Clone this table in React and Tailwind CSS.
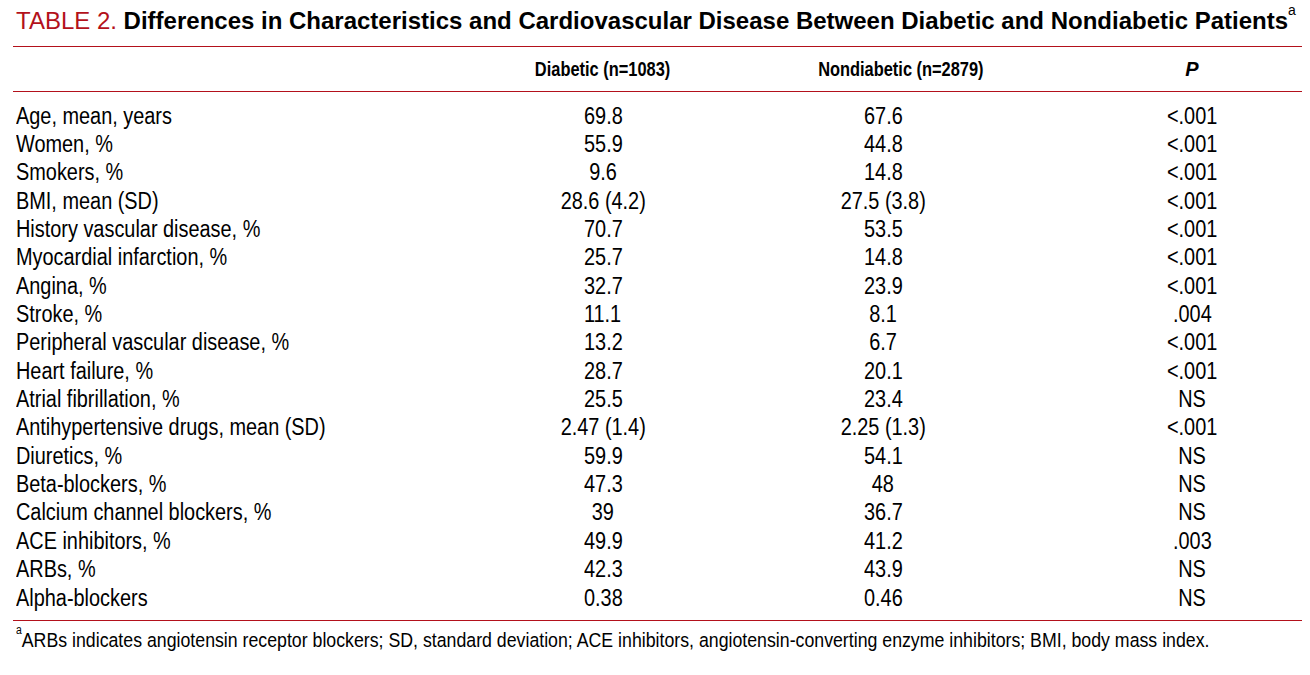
import React from "react";

const rows = [
  ["Age, mean, years", "69.8", "67.6", "<.001"],
  ["Women, %", "55.9", "44.8", "<.001"],
  ["Smokers, %", "9.6", "14.8", "<.001"],
  ["BMI, mean (SD)", "28.6 (4.2)", "27.5 (3.8)", "<.001"],
  ["History vascular disease, %", "70.7", "53.5", "<.001"],
  ["Myocardial infarction, %", "25.7", "14.8", "<.001"],
  ["Angina, %", "32.7", "23.9", "<.001"],
  ["Stroke, %", "11.1", "8.1", ".004"],
  ["Peripheral vascular disease, %", "13.2", "6.7", "<.001"],
  ["Heart failure, %", "28.7", "20.1", "<.001"],
  ["Atrial fibrillation, %", "25.5", "23.4", "NS"],
  ["Antihypertensive drugs, mean (SD)", "2.47 (1.4)", "2.25 (1.3)", "<.001"],
  ["Diuretics, %", "59.9", "54.1", "NS"],
  ["Beta-blockers, %", "47.3", "48", "NS"],
  ["Calcium channel blockers, %", "39", "36.7", "NS"],
  ["ACE inhibitors, %", "49.9", "41.2", ".003"],
  ["ARBs, %", "42.3", "43.9", "NS"],
  ["Alpha-blockers", "0.38", "0.46", "NS"],
];

const font = { fontFamily: '"Liberation Sans", Arial, sans-serif' };

// condensed look: Liberation Sans squeezed horizontally
const narrow = "inline-block whitespace-nowrap scale-x-[0.865]";

export default function App() {
  return (
    <div className="w-[1310px] h-[675px] bg-white text-black overflow-hidden" style={font}>
      <div className="pl-[13px] w-[1302px] pt-[7px]">
        <h1 className="pl-[3px] text-[24px] leading-[28px] whitespace-nowrap">
          <span className="text-[#b3111b]">TABLE 2. </span>
          <span className="font-bold">
            Differences in Characteristics and Cardiovascular Disease Between Diabetic and Nondiabetic Patients
          </span>
          <sup className="text-[14px] align-[7px]">a</sup>
        </h1>
        <div className="mt-[11px] border-t border-[#b3111b]" />
        <div className="grid grid-cols-[457px_266px_294px_1fr] h-[44px] items-center text-[20px] font-bold">
          <div />
          <div className="text-center">
            <span className="inline-block whitespace-nowrap scale-x-[0.82]">Diabetic (n=1083)</span>
          </div>
          <div className="text-center pl-[36px]">
            <span className="inline-block whitespace-nowrap scale-x-[0.82]">Nondiabetic (n=2879)</span>
          </div>
          <div className="text-center pl-[52px] italic">P</div>
        </div>
        <div className="border-t border-[#b3111b]" />
        <div className="pt-[10px] pb-[8px] text-[23px]">
          {rows.map((r) => (
            <div key={r[0]} className="grid grid-cols-[457px_266px_294px_1fr] h-[28.35px] items-center leading-none">
              <div className="pl-[3px]">
                <span className={narrow + " origin-left"}>{r[0]}</span>
              </div>
              <div className="text-center">
                <span className={narrow}>{r[1]}</span>
              </div>
              <div className="text-center">
                <span className={narrow}>{r[2]}</span>
              </div>
              <div className="text-center pl-[52px]">
                <span className={narrow}>{r[3]}</span>
              </div>
            </div>
          ))}
        </div>
        <div className="border-t border-[#b3111b]" />
        <p className="pl-[3px] mt-[6px] text-[20.5px] leading-[26px] whitespace-nowrap">
          <span className={narrow + " origin-left"}>
            <sup className="text-[12px] align-[7px]">a</sup>
            ARBs indicates angiotensin receptor blockers; SD, standard deviation; ACE inhibitors, angiotensin-converting enzyme inhibitors; BMI, body mass index.
          </span>
        </p>
      </div>
    </div>
  );
}
